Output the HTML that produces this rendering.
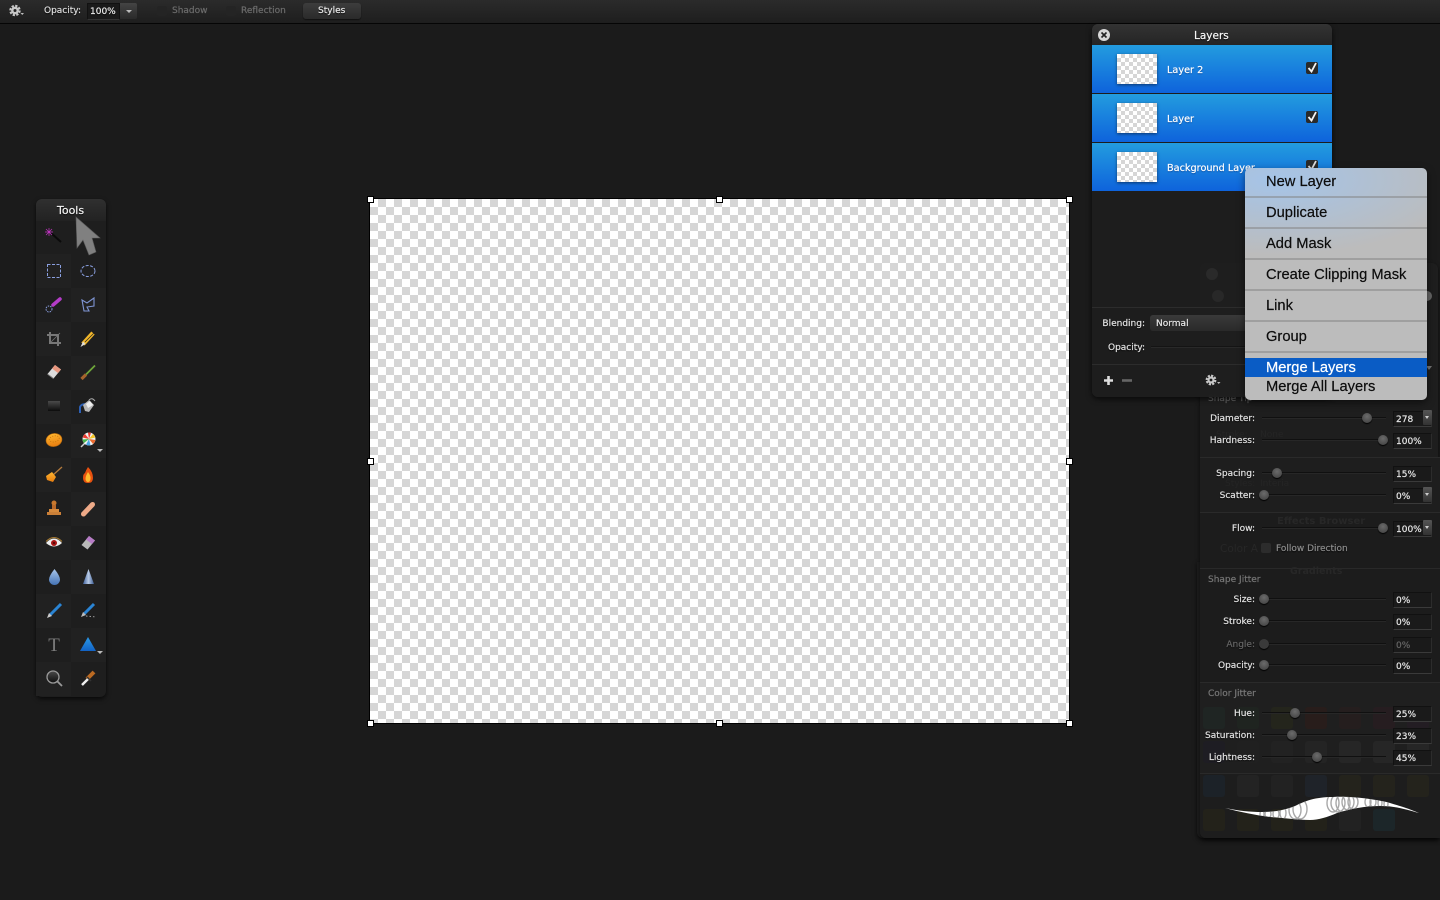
<!DOCTYPE html>
<html><head><meta charset="utf-8"><title>Layers</title>
<style>
html,body{margin:0;padding:0;width:1440px;height:900px;overflow:hidden;background:#1b1b1b}
body{position:relative;font-family:"DejaVu Sans","Liberation Sans",sans-serif;font-size:9px;color:#e2e2e2}
div,span{position:absolute;box-sizing:border-box}
.t{white-space:nowrap;line-height:14px;height:14px;margin-top:1px;text-shadow:0 1px 1px #000;-webkit-text-stroke:.2px currentColor}
.r{text-align:right;width:80px}
.n{font-size:9.7px;color:#fff;text-shadow:0 1px 1px #0a4a9a;margin-top:2px}
.m{font-family:"Liberation Sans",sans-serif;font-size:14.7px;color:#0c0c0c;left:1266px;line-height:18px;height:18px;margin-top:1px;white-space:nowrap;-webkit-text-stroke:.2px currentColor}
.sep{left:0;width:182px;height:2px;background:rgba(130,130,130,.5)}
.ck{background:repeating-conic-gradient(#d6d6d6 0 25%,#fff 0 50%)}
.row{left:1092px;width:240px;height:48px;background:linear-gradient(#239cdf,#0e63dc)}
.th{left:25px;top:9px;width:40px;height:30px;background-size:8px 8px;box-shadow:0 1px 3px rgba(0,0,0,.5)}
.h{width:7px;height:7px;background:#fff;border:1px solid #000}
.tr{left:1262px;width:124px;height:2px;background:linear-gradient(#050505,#333)}
.kn{width:10px;height:10px;border-radius:50%;background:radial-gradient(circle at 50% 35%,#6b6b6b,#3d3d3d);box-shadow:0 1px 1px #000}
.f{left:1393px;width:39px;height:16px;background:#1a1a1a;border:1px solid #111;border-bottom-color:#3a3a3a;border-right-color:#2c2c2c;color:#e8e8e8;padding-left:2px;line-height:17px;font-size:9px;-webkit-text-stroke:.2px currentColor}
.st{left:1423px;width:9px;height:15px;background:linear-gradient(#555,#333);border-radius:1px}
.st:after{content:"";position:absolute;left:2px;top:6px;border:2.5px solid transparent;border-top:3px solid #ccc}
.g{color:#272727;white-space:nowrap;text-shadow:none;-webkit-text-stroke:0}
.sw{width:22px;height:22px;border-radius:3px}
.c{width:35px;height:34px;background:#212121}
</style></head><body>

<!-- top bar -->
<div style="left:0;top:0;width:1440px;height:24px;background:linear-gradient(#2b2b2b,#1e1e1e);border-bottom:1px solid #050505"></div>
<svg style="position:absolute;left:0;top:0" width="1440" height="24">
<circle cx="15" cy="10.500" r="2.700" fill="none" stroke="#c8c8c8" stroke-width="2.400"/>
<circle cx="15" cy="10.500" r="4.700" fill="none" stroke="#c8c8c8" stroke-width="2" stroke-dasharray="2.300 1.400"/>
<path d="M20.500 13h3.500l-1.750 2z" fill="#bbb"/>
</svg>
<span class="t" style="left:44px;top:3px;color:#ddd">Opacity:</span>
<div style="left:87px;top:3px;width:33px;height:17px;background:#1a1a1a;border:1px solid #111;border-bottom-color:#333"></div>
<span class="t" style="left:90px;top:4px;color:#eee">100%</span>
<div style="left:120px;top:3px;width:17px;height:16px;background:linear-gradient(#444,#2a2a2a);border-radius:0 2px 2px 0"></div>
<div style="left:126px;top:10px;border:3px solid transparent;border-top:3px solid #bbb"></div>
<div style="left:157px;top:6px;width:10px;height:10px;background:#242424;border-radius:2px"></div>
<span class="t" style="left:172px;top:3px;color:#6c6c6c;text-shadow:none">Shadow</span>
<div style="left:226px;top:6px;width:10px;height:10px;background:#242424;border-radius:2px"></div>
<span class="t" style="left:241px;top:3px;color:#6c6c6c;text-shadow:none">Reflection</span>
<div style="left:303px;top:3px;width:58px;height:16px;background:linear-gradient(#3d3d3d,#2a2a2a);border-radius:3px;box-shadow:0 1px 1px #111"></div>
<span class="t" style="left:318px;top:3px;color:#e8e8e8">Styles</span>

<!-- canvas -->
<div class="ck" style="left:370px;top:199px;width:699px;height:524px;background-size:16px 16px;box-shadow:0 0 0 1px #000"></div>
<div class="h" style="left:367px;top:196px"></div><div class="h" style="left:716px;top:196px"></div><div class="h" style="left:1066px;top:196px"></div>
<div class="h" style="left:367px;top:458px"></div><div class="h" style="left:1066px;top:458px"></div>
<div class="h" style="left:367px;top:720px"></div><div class="h" style="left:716px;top:720px"></div><div class="h" style="left:1066px;top:720px"></div>

<!-- tools -->
<div style="left:36px;top:199px;width:70px;height:498px;border-radius:6px;background:#1e1e1e;box-shadow:0 2px 5px rgba(0,0,0,.7)">
  <div style="left:0;top:0;width:70px;height:22px;border-radius:6px 6px 0 0;background:linear-gradient(#303030,#222)"></div>
  <div class="c" style="left:0;top:55px"></div>
  <div class="c" style="left:35px;top:89px"></div>
  <div class="c" style="left:0;top:123px"></div>
  <div class="c" style="left:35px;top:157px"></div>
  <div class="c" style="left:0;top:191px"></div>
  <div class="c" style="left:35px;top:225px"></div>
  <div class="c" style="left:0;top:259px"></div>
  <div class="c" style="left:35px;top:293px"></div>
  <div class="c" style="left:0;top:327px"></div>
  <div class="c" style="left:35px;top:361px"></div>
  <div class="c" style="left:0;top:395px"></div>
  <div class="c" style="left:35px;top:429px"></div>
  <div class="c" style="left:0;top:463px"></div>
</div>
<span class="t" style="left:57px;top:203px;color:#f4f4f4;font-size:11px">Tools</span>
<svg style="position:absolute;left:0;top:0" width="1440" height="900">
<defs>
<linearGradient id="blu" x1="0" y1="0" x2="0" y2="1"><stop offset="0" stop-color="#2b9ae8"/><stop offset="1" stop-color="#1262c4"/></linearGradient>
<linearGradient id="org" x1="0" y1="0" x2="0" y2="1"><stop offset="0" stop-color="#ffb52e"/><stop offset="1" stop-color="#e77d10"/></linearGradient>
<linearGradient id="drp" x1="0" y1="0" x2="0" y2="1"><stop offset="0" stop-color="#a9c6ea"/><stop offset="1" stop-color="#4473b5"/></linearGradient>
<linearGradient id="con" x1="0" y1="0" x2="1" y2="0"><stop offset="0" stop-color="#3c5f9c"/><stop offset=".5" stop-color="#b9cbe6"/><stop offset="1" stop-color="#3a5a92"/></linearGradient>
<linearGradient id="drk" x1="0" y1="0" x2="0" y2="1"><stop offset="0" stop-color="#4a4a4a"/><stop offset="1" stop-color="#0c0c0c"/></linearGradient>
</defs>
<!-- arrow -->
<path d="M76 217L100 238L92 238L96 252L89 255L83 240L77 248Z" fill="#808080" stroke="#5e5e5e" stroke-width=".6"/>
<!-- wand -->
<g transform="translate(54,236)"><path d="M-3 -3L7 6" stroke="#0a0a0a" stroke-width="2"/><path d="M-9 -4H-1M-5 -8V0M-8 -7L-2 -1M-2 -7L-8 -1" stroke="#c235c2" stroke-width=".7"/></g>
<!-- marquee -->
<rect x="47.500" y="264.500" width="13" height="13" fill="none" stroke="#8a9fe0" stroke-dasharray="3 1.500"/>
<ellipse cx="88" cy="271" rx="7" ry="5.500" fill="none" stroke="#8a9fe0" stroke-dasharray="3 1.500"/>
<!-- row 3 -->
<g transform="translate(54,304)"><path d="M-1 1L6 -5" stroke="#b43cc8" stroke-width="3.500" stroke-linecap="round"/><circle cx="-5" cy="5" r="3" fill="none" stroke="#8a9fe0" stroke-dasharray="1.500 1"/></g>
<path d="M82 300L87 303L94 298L94 306L87 307L89 311L84 311Z" fill="none" stroke="#7f95d4" stroke-width="1.100"/>
<!-- crop -->
<g transform="translate(54,339)" fill="none" stroke="#777" stroke-width="2"><path d="M-4 -7V4H7"/><path d="M-7 -4H4V7"/><path d="M-4 4L6 -6" stroke-width=".8"/></g>
<!-- knife -->
<g transform="translate(88,339)"><path d="M-5 5L5 -6" stroke="#f1b62a" stroke-width="4.500"/><path d="M-7.500 8L-5 2.500L-2.500 5Z" fill="#ddd"/><path d="M-3 3L6 -6" stroke="#222" stroke-width=".7"/></g>
<!-- eraser -->
<g transform="translate(54,372)"><path d="M-6.500 2L1 -7L7 -2.500L-0.500 6.500Z" fill="#dcdcdc"/><path d="M-2 -3.500L1 -7L7 -2.500L4 1Z" fill="#e8967e"/><path d="M-6.500 2L-0.500 6.500" stroke="#888"/></g>
<!-- brush -->
<g transform="translate(88,372.500)"><path d="M-2 2L7 -7" stroke="#6fa63a" stroke-width="1.800"/><path d="M-6.500 6.500L-2 2" stroke="#a5632c" stroke-width="3.200"/></g>
<!-- rect -->
<rect x="48" y="401" width="12" height="10" fill="url(#drk)"/>
<!-- bucket -->
<g transform="translate(88,406)"><path d="M-8 7V1Q-7 -2 -2 -2" stroke="#2c5fb4" stroke-width="2" fill="none"/><path d="M-5 -1L1 -6L6 -1L1 6L-3 5Z" fill="#b8b8b8"/><path d="M-2 -2L2 -5L5 -1L0 2Z" fill="#eee"/><path d="M1 -6Q4 -9 7 -5" stroke="#aaa" stroke-width="1" fill="none"/></g>
<!-- coin -->
<ellipse cx="54" cy="440" rx="8" ry="6.500" fill="url(#org)" stroke="#b86a0c" stroke-width=".6" transform="rotate(-12 54 440)"/>
<ellipse cx="54.500" cy="439" rx="5" ry="3" fill="none" stroke="#c9780f" stroke-dasharray="1 1.500" transform="rotate(-12 54 440)"/>
<!-- lollipop -->
<g transform="translate(89,439)"><path d="M-3 3L-8 8" stroke="#ccc" stroke-width="1.500"/><circle r="6.500" fill="#f1f1f1"/><path d="M0 0L-1 -6.500A6.500 6.500 0 0 1 2 -6.200Z" fill="#eb3b2f"/><path d="M0 0L4 -5A6.500 6.500 0 0 1 6.300 -1.500Z" fill="#f6c626"/><path d="M0 0L6.400 1A6.500 6.500 0 0 1 4 5Z" fill="#eb6a2f"/><path d="M0 0L1.500 6.300A6.500 6.500 0 0 1 -3 5.800Z" fill="#4ba3e3"/><path d="M0 0L-5 4A6.500 6.500 0 0 1 -6.500 0.500Z" fill="#48b64a"/><path d="M0 0L-6.400 -1.500A6.500 6.500 0 0 1 -4 -5Z" fill="#eb3b2f"/></g>
<path d="M97 449h6l-3 3z" fill="#bbb"/>
<!-- broom -->
<g transform="translate(54,475)"><path d="M-1 0L8 -8" stroke="#b27a3c" stroke-width="1.300"/><path d="M-2 -3L2 2L-1 7L-7 5L-8 1Z" fill="url(#org)"/></g>
<!-- flame -->
<path d="M88 467Q93 472 93 478Q93 483 88 483Q83 483 83 478Q83 474 85 473Q86 470 88 467Z" fill="#e8510f"/>
<path d="M88 472Q91 476 90.500 479Q90 482 88 482Q86 482 85.500 479Q85.500 476 88 472Z" fill="#fdbb2e"/>
<!-- stamp -->
<g transform="translate(54,509)"><circle cy="-6" r="2.500" fill="#c8782e"/><rect x="-2" y="-4" width="4" height="5" fill="#b9692a"/><rect x="-5" y="0" width="10" height="3" fill="#d68a3d"/><rect x="-7" y="3" width="14" height="3" fill="#c97f38"/></g>
<!-- bandage -->
<path d="M83.500 514L92.500 504.500" stroke="#eeaa88" stroke-width="5" stroke-linecap="round"/>
<!-- eye -->
<g transform="translate(54,543)"><path d="M-8 0Q0 -9 8 0Q0 7 -8 0Z" fill="#eee"/><path d="M-8 -1.500Q0 -9.500 8 -1.500" stroke="#a67a30" stroke-width="1" fill="none"/><circle r="3" fill="#a81414"/><circle r=".9" fill="#200"/></g>
<!-- eraser 2 -->
<g transform="translate(88,543)"><path d="M-6.500 2L1 -7L7 -2.500L-0.500 6.500Z" fill="#b8b8b8"/><path d="M-2 -3.500L1 -7L7 -2.500L4 1Z" fill="#b67bc6"/></g>
<!-- drop -->
<path d="M54.500 569Q60 576 60 579.500A5.500 5.500 0 0 1 49 579.500Q49 576 54.500 569Z" fill="url(#drp)"/>
<!-- cone -->
<path d="M88.500 569L94 584H83Z" fill="url(#con)"/>
<!-- pens -->
<g transform="translate(54,611)"><path d="M-4 4L7 -7" stroke="#2a84d4" stroke-width="3"/><path d="M-7 7L-5 2L-2 5Z" fill="#ccc"/></g>
<g transform="translate(88,610)"><path d="M-4 4L6 -6" stroke="#2a84d4" stroke-width="3"/><path d="M-7 7L-5 2L-2 5Z" fill="#bbb"/><path d="M-2 6L8 7" stroke="#aaa" stroke-dasharray="1.500 2" stroke-width=".9"/></g>
<!-- T -->
<text x="54" y="651" text-anchor="middle" font-family="Liberation Serif" font-size="19" fill="#7c7c7c">T</text>
<!-- triangle -->
<path d="M88 637L96 651H80Z" fill="url(#blu)"/>
<path d="M97 651h6l-3 3z" fill="#bbb"/>
<!-- magnifier -->
<circle cx="53" cy="677" r="6" fill="url(#drk)" stroke="#999" stroke-width="1.300"/>
<path d="M57.500 681.500L62 686" stroke="#999" stroke-width="1.800"/>
<!-- dropper -->
<g transform="translate(88,678)"><path d="M-1 1L6 -6" stroke="#bb6a22" stroke-width="4"/><path d="M-6 7L0 1" stroke="#eee" stroke-width="2.500"/><path d="M-1 -1L3 3" stroke="#333" stroke-width="1.500"/></g>
</svg>

<!-- brush panel (behind) -->
<div style="left:1197px;top:562px;width:243px;height:276px;border-radius:0 0 0 6px;background:#1d1d1d;box-shadow:0 2px 5px rgba(0,0,0,.6)"></div>
<div style="left:1200px;top:263px;width:238px;height:575px;border-radius:6px 6px 0 6px;background:#1e1e1e;box-shadow:0 2px 5px rgba(0,0,0,.6)"></div>
<div style="left:1200px;top:457px;width:240px;height:55px;background:#1e1e1e;border-top:1px solid #2a2a2a"></div>
<div style="left:1200px;top:512px;width:240px;height:56px;background:#1c1c1c;border-top:1px solid #2a2a2a"></div>
<div style="left:1200px;top:568px;width:240px;height:114px;background:#1c1c1c;border-top:1px solid #292929"></div>
<div style="left:1200px;top:682px;width:240px;height:91px;background:#1f1f1f;border-top:1px solid #2a2a2a"></div>
<div style="left:1200px;top:773px;width:240px;height:65px;background:#1d1d1d;border-top:1px solid #2a2a2a;border-radius:0 0 0 6px"></div>

<!-- ghost content -->
<span class="t g" style="left:1277px;top:514px;font-size:10px;font-weight:bold">Effects Browser</span>
<span class="t g" style="left:1220px;top:541px;font-size:10.500px">Color A</span>
<span class="t g" style="left:1290px;top:564px;font-size:9.500px;font-weight:bold">Gradients</span>
<span class="t g" style="left:1216px;top:427px;color:#252525">Stroke:</span>
<span class="t g" style="left:1260px;top:427px;color:#252525">None</span>
<span class="t g" style="left:1260px;top:476px;color:#252525">Interia</span>
<span class="t g" style="left:1225px;top:476px;color:#252525">Styles:</span>
<div class="sw" style="left:1203px;top:707px;background:#1f2523"></div>
<div class="sw" style="left:1237px;top:707px;background:#1f2420"></div>
<div class="sw" style="left:1271px;top:707px;background:#24251c"></div>
<div class="sw" style="left:1305px;top:707px;background:#281d1b"></div>
<div class="sw" style="left:1339px;top:707px;background:#251e1e"></div>
<div class="sw" style="left:1373px;top:707px;background:#261d20"></div>
<div class="sw" style="left:1407px;top:707px;background:#231d23"></div>
<div class="sw" style="left:1203px;top:741px;background:#1e1d23"></div>
<div class="sw" style="left:1237px;top:741px;background:#202020"></div>
<div class="sw" style="left:1271px;top:741px;background:#222"></div>
<div class="sw" style="left:1305px;top:741px;background:#242424"></div>
<div class="sw" style="left:1339px;top:741px;background:#262626"></div>
<div class="sw" style="left:1373px;top:741px;background:#262626"></div>
<div class="sw" style="left:1407px;top:741px;background:#262626"></div>
<div class="sw" style="left:1203px;top:775px;background:#1c2228"></div>
<div class="sw" style="left:1237px;top:775px;background:#232323"></div>
<div class="sw" style="left:1271px;top:775px;background:#222"></div>
<div class="sw" style="left:1305px;top:775px;background:#1f2329"></div>
<div class="sw" style="left:1339px;top:775px;background:#24231c"></div>
<div class="sw" style="left:1373px;top:775px;background:#24231c"></div>
<div class="sw" style="left:1407px;top:775px;background:#24231c"></div>
<div class="sw" style="left:1203px;top:809px;background:#23221a"></div>
<div class="sw" style="left:1237px;top:809px;background:#23221a"></div>
<div class="sw" style="left:1271px;top:809px;background:#23221a"></div>
<div class="sw" style="left:1305px;top:809px;background:#23221a"></div>
<div class="sw" style="left:1339px;top:809px;background:#222"></div>
<div class="sw" style="left:1373px;top:809px;background:#1c2629"></div>

<!-- brush controls -->
<span class="t" style="left:1208px;top:391px;color:#666;text-shadow:none">Shape Tip</span>
<span class="t r" style="left:1175px;top:411px">Diameter:</span>
<div class="tr" style="top:417px"></div><div class="kn" style="left:1362px;top:413px"></div>
<div class="f" style="top:411px;padding-left:2px">278</div><div class="st" style="top:410px"></div>
<span class="t r" style="left:1175px;top:433px">Hardness:</span>
<div class="tr" style="top:439px"></div><div class="kn" style="left:1378px;top:435px"></div>
<div class="f" style="top:433px">100%</div>
<span class="t r" style="left:1175px;top:466px">Spacing:</span>
<div class="tr" style="top:472px"></div><div class="kn" style="left:1272px;top:468px"></div>
<div class="f" style="top:466px">15%</div>
<span class="t r" style="left:1175px;top:488px">Scatter:</span>
<div class="tr" style="top:494px"></div><div class="kn" style="left:1259px;top:490px"></div>
<div class="f" style="top:488px">0%</div><div class="st" style="top:487px"></div>
<span class="t r" style="left:1175px;top:521px">Flow:</span>
<div class="tr" style="top:527px"></div><div class="kn" style="left:1378px;top:523px"></div>
<div class="f" style="top:521px">100%</div><div class="st" style="top:520px"></div>
<div style="left:1261px;top:543px;width:10px;height:10px;background:#2c2c2c;border-radius:2px"></div>
<span class="t" style="left:1276px;top:541px;color:#8c8c8c">Follow Direction</span>
<span class="t" style="left:1208px;top:572px;color:#777;text-shadow:none">Shape Jitter</span>
<span class="t r" style="left:1175px;top:592px">Size:</span>
<div class="tr" style="top:598px"></div><div class="kn" style="left:1259px;top:594px"></div>
<div class="f" style="top:592px">0%</div>
<span class="t r" style="left:1175px;top:614px">Stroke:</span>
<div class="tr" style="top:620px"></div><div class="kn" style="left:1259px;top:616px"></div>
<div class="f" style="top:614px">0%</div>
<span class="t r" style="left:1175px;top:637px;color:#666">Angle:</span>
<div class="tr" style="top:643px"></div><div class="kn" style="left:1259px;top:639px;background:#3a3a3a"></div>
<div class="f" style="top:637px;color:#666">0%</div>
<span class="t r" style="left:1175px;top:658px">Opacity:</span>
<div class="tr" style="top:664px"></div><div class="kn" style="left:1259px;top:660px"></div>
<div class="f" style="top:658px">0%</div>
<span class="t" style="left:1208px;top:686px;color:#777;text-shadow:none">Color Jitter</span>
<span class="t r" style="left:1175px;top:706px">Hue:</span>
<div class="tr" style="top:712px"></div><div class="kn" style="left:1290px;top:708px"></div>
<div class="f" style="top:706px">25%</div>
<span class="t r" style="left:1175px;top:728px">Saturation:</span>
<div class="tr" style="top:734px"></div><div class="kn" style="left:1287px;top:730px"></div>
<div class="f" style="top:728px">23%</div>
<span class="t r" style="left:1175px;top:750px">Lightness:</span>
<div class="tr" style="top:756px"></div><div class="kn" style="left:1312px;top:752px"></div>
<div class="f" style="top:750px">45%</div>
<svg style="position:absolute;left:0;top:0" width="1440" height="900">
<defs><clipPath id="bc"><path d="M1225 808C1240 811 1250 812 1262 812C1275 812 1285 810 1295 806C1305 801 1315 797 1333 797C1350 796 1375 799 1390 803C1400 806 1410 809 1419 813C1405 809 1395 806 1380 806C1365 806 1350 809 1337 813C1328 817 1318 820 1310 820C1298 820 1285 818 1270 817C1255 815 1240 812 1225 808Z"/></clipPath></defs>
<g clip-path="url(#bc)">
<rect x="1220" y="790" width="205" height="35" fill="#fff"/>
<g fill="none" stroke="#a8a8a8" stroke-width="1.400">
<ellipse cx="1262" cy="814" rx="2" ry="4"/><ellipse cx="1268" cy="814" rx="3" ry="4"/><ellipse cx="1276" cy="814" rx="3" ry="5"/><ellipse cx="1283" cy="813" rx="3" ry="6"/>
<ellipse cx="1295" cy="810" rx="6" ry="9"/><ellipse cx="1300" cy="809" rx="7" ry="10"/>
<ellipse cx="1333" cy="803" rx="6" ry="9"/><ellipse cx="1338" cy="803" rx="7" ry="9"/><ellipse cx="1343" cy="803" rx="7" ry="9"/><ellipse cx="1348" cy="802" rx="6" ry="8"/><ellipse cx="1353" cy="802" rx="5" ry="7"/>
<ellipse cx="1368" cy="802" rx="3" ry="5"/><ellipse cx="1373" cy="802" rx="3" ry="5"/><ellipse cx="1380" cy="803" rx="2" ry="4"/><ellipse cx="1386" cy="804" rx="2" ry="4"/>
</g></g>
<path d="M1426 366h6l-3 4z" fill="#777"/>
<circle cx="1427" cy="296" r="5" fill="#666"/>
</svg>

<!-- layers panel -->
<div style="left:1092px;top:24px;width:240px;height:373px;border-radius:6px;background:rgba(30,30,30,.97);box-shadow:0 2px 6px rgba(0,0,0,.7)"></div>
<div style="left:1092px;top:24px;width:240px;height:21px;border-radius:6px 6px 0 0;background:linear-gradient(#333,#252525)"></div>
<svg style="position:absolute;left:1092px;top:24px" width="30" height="21"><circle cx="12" cy="11" r="6" fill="#d8d8d8"/><path d="M9.500 8.500L14.500 13.500M14.500 8.500L9.500 13.500" stroke="#222" stroke-width="1.600"/></svg>
<span class="t" style="left:1194px;top:28px;color:#f8f8f8;font-size:10.500px">Layers</span>
<div class="row" style="top:45px"><div class="th ck"></div></div>
<div class="row" style="top:94px"><div class="th ck"></div></div>
<div class="row" style="top:143px"><div class="th ck"></div></div>
<span class="t n" style="left:1167px;top:62px">Layer 2</span>
<span class="t n" style="left:1167px;top:111px">Layer</span>
<span class="t n" style="left:1167px;top:160px">Background Layer</span>
<svg style="position:absolute;left:1300px;top:55px" width="24" height="120">
<rect x="6" y="7" width="12" height="12" rx="2" fill="#2a2a2a"/><path d="M8.500 13L11.500 16.500L16 8" stroke="#f4f4f4" stroke-width="1.800" fill="none"/>
<rect x="6" y="56" width="12" height="12" rx="2" fill="#2a2a2a"/><path d="M8.500 62L11.500 65.500L16 57" stroke="#f4f4f4" stroke-width="1.800" fill="none"/>
<rect x="6" y="105" width="12" height="12" rx="2" fill="#2a2a2a"/><path d="M8.500 111L11.500 114.500L16 106" stroke="#ddd" stroke-width="1.800" fill="none"/>
</svg>
<svg style="position:absolute;left:1200px;top:263px" width="40" height="45"><circle cx="12" cy="11" r="6" fill="#2a2a2a"/><circle cx="18" cy="33" r="6" fill="#282828"/></svg>
<div style="left:1092px;top:307px;width:240px;height:1px;background:#2c2c2c"></div>
<span class="t r" style="left:1065px;top:316px">Blending:</span>
<div style="left:1150px;top:315px;width:110px;height:16px;border-radius:3px;background:linear-gradient(#3a3a3a,#2a2a2a)"></div>
<span class="t" style="left:1156px;top:316px;color:#e8e8e8">Normal</span>
<span class="t r" style="left:1065px;top:340px">Opacity:</span>
<div style="left:1151px;top:346px;width:110px;height:2px;background:linear-gradient(#0a0a0a,#333)"></div>
<div style="left:1092px;top:364px;width:240px;height:1px;background:#2c2c2c"></div>
<svg style="position:absolute;left:1092px;top:364px" width="140" height="30">
<path d="M16.500 12V21M12 16.500H21" stroke="#ddd" stroke-width="2.600"/>
<path d="M30 16.500H40" stroke="#666" stroke-width="2.600"/>
<circle cx="119" cy="16" r="2.500" fill="none" stroke="#c8c8c8" stroke-width="2.200"/>
<circle cx="119" cy="16" r="4.400" fill="none" stroke="#c8c8c8" stroke-width="2" stroke-dasharray="2.200 1.250"/>
<path d="M125 18h3.500l-1.750 2z" fill="#bbb"/>
</svg>

<!-- menu -->
<div style="left:1245px;top:168px;width:182px;height:232px;border-radius:5px;background:radial-gradient(ellipse 190px 75px at 30px 12px,#a5c4e8,rgba(189,189,189,0)),#bcbcbc;box-shadow:0 3px 8px rgba(0,0,0,.5);overflow:hidden">
  <div class="sep" style="top:28px"></div>
  <div class="sep" style="top:59px"></div>
  <div class="sep" style="top:90px"></div>
  <div class="sep" style="top:121px"></div>
  <div class="sep" style="top:152px"></div>
  <div class="sep" style="top:183px"></div>
  <div style="left:0;top:190px;width:182px;height:19px;background:#0a5cc5"></div>
</div>
<span class="m" style="top:172px">New Layer</span>
<span class="m" style="top:203px">Duplicate</span>
<span class="m" style="top:234px">Add Mask</span>
<span class="m" style="top:265px">Create Clipping Mask</span>
<span class="m" style="top:296px">Link</span>
<span class="m" style="top:327px">Group</span>
<span class="m" style="top:358px;color:#fff">Merge Layers</span>
<span class="m" style="top:377px">Merge All Layers</span>
</body></html>
